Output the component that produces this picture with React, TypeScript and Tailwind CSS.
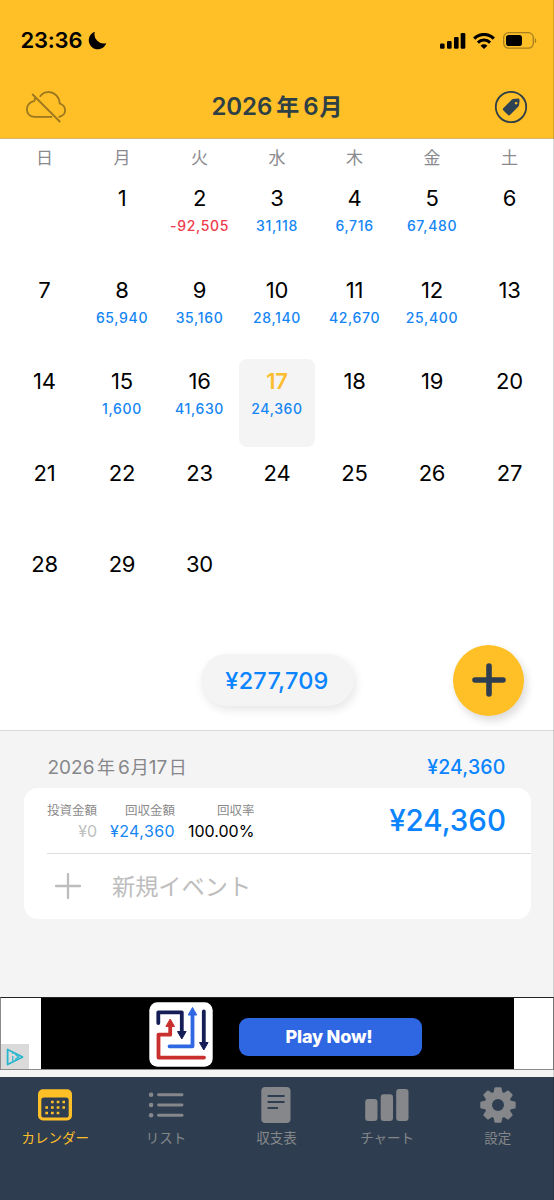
import clsx from "clsx";
import type { ReactNode } from "react";

const weekdays = ["日", "月", "火", "水", "木", "金", "土"];

const amounts: Record<number, number> = {
  2: -92505,
  3: 31118,
  4: 6716,
  5: 67480,
  8: 65940,
  9: 35160,
  10: 28140,
  11: 42670,
  12: 25400,
  15: 1600,
  16: 41630,
  17: 24360,
};

const SELECTED_DAY = 17;
const FIRST_WEEKDAY = 1;
const DAYS_IN_MONTH = 30;

function StatusBar() {
  return (
    <div className="flex h-[80px] items-center pl-[20.5px] pr-[17px] pt-[1px]">
      <span className="text-[22px] font-semibold tracking-[-0.2px]">23:36</span>
      <svg width="19" height="19" viewBox="0 0 19 19" className="ml-[6px]">
        <path
          d="M6.8 .8A9 9 0 1 0 18.3 12.2 9.3 9.3 0 0 1 6.8 .8Z"
          fill="#000"
        />
      </svg>
      <div className="ml-auto flex items-center">
        <svg width="26" height="16" viewBox="0 0 26 16">
          <rect x="0" y="10.5" width="4.6" height="5.2" rx="1.2" />
          <rect x="7" y="8" width="4.6" height="7.7" rx="1.2" />
          <rect x="14" y="4" width="4.6" height="11.7" rx="1.2" />
          <rect x="20.7" y="0" width="4.6" height="15.7" rx="1.2" />
        </svg>
        <svg width="22" height="16" viewBox="0 0 22 16" className="ml-[7px]">
          <path
            d="M1.2 5.6a13.8 13.8 0 0 1 19.6 0"
            fill="none"
            stroke="#000"
            strokeWidth="3.2"
          />
          <path
            d="M4.9 9.6a8.6 8.6 0 0 1 12.2 0"
            fill="none"
            stroke="#000"
            strokeWidth="3"
          />
          <path d="M11 16 7.600 12.700a4.800 4.800 0 0 1 6.800 0Z" />
        </svg>
        <svg width="34" height="17" viewBox="0 0 34 17" className="ml-[8px]">
          <rect
            x=".7"
            y=".7"
            width="29.6"
            height="15.4"
            rx="4.8"
            fill="none"
            stroke="#a8801f"
            strokeWidth="1.3"
          />
          <rect x="3" y="3" width="16" height="11" rx="2.8" />
          <path d="M31.8 6v5.2c1.9-.8 1.9-4.4 0-5.2Z" fill="#a8801f" />
        </svg>
      </div>
    </div>
  );
}

function CloudOffIcon() {
  return (
    <svg
      width="42"
      height="34"
      viewBox="0 0 42 34"
      fill="none"
      stroke="#9b771f"
      strokeWidth="1.8"
    >
      <path d="M8.8 10.8C3.5 12 .9 15 .9 19.3c0 4.6 3.3 7.500 7.800 7.500h17.500" />
      <path d="M8.8 10.8c-.2-1.700 0-2.400.600-3.400M13.800 6.800c2-3.200 5.400-5 9.400-4.700 5.900.4 10.200 4.900 10.500 11.400 3.600 1.200 5.500 3.800 5.400 7.200-.1 3-2.300 5.300-6.500 6.300" />
      <path d="m6.200 4 28 28" />
    </svg>
  );
}

function TagIcon() {
  return (
    <svg width="34" height="34" viewBox="0 0 34 34">
      <circle
        cx="17"
        cy="17"
        r="15.2"
        fill="none"
        stroke="#2f3f48"
        strokeWidth="1.8"
      />
      <path
        fillRule="evenodd"
        fill="#2d4255"
        d="M9.2 18.2 17.5 10c.5-.5 1-.8 1.7-.9l4.6-.5c1.1-.1 1.9.7 1.8 1.8l-.5 4.6c-.1.7-.4 1.2-.9 1.7L16 25c-.6.6-1.4.6-2 0l-4.8-4.8c-.6-.6-.6-1.4 0-2Zm12.9-6.3a1.3 1.3 0 1 0 .01 0Z"
      />
    </svg>
  );
}

function Header() {
  return (
    <header className="h-[139px] border-b border-[#d9b865] bg-[#ffbf27]">
      <StatusBar />
      <div className="grid h-[53px] grid-cols-[1fr_auto_1fr] items-center px-[26px]">
        <CloudOffIcon />
        <h1 className="flex items-center text-[24px] font-semibold leading-[30px] text-[#2e4045]">
          <span className="tracking-[-0.1px]">2026</span>
          <span className="ml-[4px] text-[23px]">年</span>
          <span className="ml-[4px]">6</span>
          <span className="ml-[1px] text-[23px]">月</span>
        </h1>
        <div className="justify-self-end">
          <TagIcon />
        </div>
      </div>
    </header>
  );
}

function DayCell({ day }: { day: number }) {
  const amount = amounts[day];
  const selected = day === SELECTED_DAY;
  return (
    <div className="h-[91.6px] px-[0.5px]">
      <div
        className={clsx(
          "flex h-[88px] flex-col items-center rounded-[8px] pt-[8px]",
          selected && "bg-[#f4f4f4]",
        )}
      >
        <span
          className={clsx(
            "text-[22px] leading-[28px] tracking-[-0.2px]",
            selected ? "font-semibold text-[#fcbd30]" : "text-black",
          )}
        >
          {day}
        </span>
        {amount !== undefined && (
          <span
            className={clsx(
              "mt-[5px] text-[14px] font-medium leading-[18px] tracking-[0.65px]",
              amount < 0 ? "text-[#ee3a4c]" : "text-[#1485f4]",
            )}
          >
            {amount.toLocaleString("en-US")}
          </span>
        )}
      </div>
    </div>
  );
}

function Calendar() {
  const days = Array.from({ length: DAYS_IN_MONTH }, (_, i) => i + 1);
  return (
    <section className="h-[591px] bg-white">
      <div className="grid h-[37px] grid-cols-7 px-[5.75px] pt-[7px] text-center text-[17px] leading-[24px] text-[#8a8a8e]">
        {weekdays.map((name) => (
          <span key={name}>{name}</span>
        ))}
      </div>
      <div className="grid grid-cols-7 px-[5.75px]">
        {Array.from({ length: FIRST_WEEKDAY }, (_, i) => (
          <div key={`blank-${i}`} />
        ))}
        {days.map((day) => (
          <DayCell key={day} day={day} />
        ))}
      </div>
      <div className="relative flex justify-center pt-[20px]">
        <div className="flex h-[52px] w-[153px] items-center justify-center rounded-full bg-[#f4f4f4] pt-[2px] text-[23.5px] font-medium tracking-[0.2px] text-[#0a84ff] shadow-[2px_4px_10px_rgba(0,0,0,0.1)]">
          ¥277,709
        </div>
        <button
          type="button"
          className="absolute right-[30px] top-[11px] flex h-[71px] w-[71px] items-center justify-center rounded-full bg-[#ffbf27] shadow-[3px_5px_8px_rgba(0,0,0,0.14)]"
        >
          <svg width="34" height="34" viewBox="0 0 34 34">
            <path
              d="M17 3v28M3 17h28"
              stroke="#2e3e50"
              strokeWidth="5.6"
              strokeLinecap="round"
            />
          </svg>
        </button>
      </div>
    </section>
  );
}

interface StatProps {
  label: string;
  value: string;
  className: string;
}

function Stat({ label, value, className }: StatProps) {
  return (
    <div className="flex flex-col items-end whitespace-nowrap">
      <span className="text-[12.5px] leading-[18px] text-[#8a8a8a]">{label}</span>
      <span className={clsx("mt-[1px] text-[16px] leading-[20px]", className)}>
        {value}
      </span>
    </div>
  );
}

function DayDetail() {
  return (
    <section className="h-[267px] border-t border-[#d8d8d8] bg-[#f4f4f4] pl-[24px] pr-[23.5px]">
      <div className="flex h-[57px] items-center justify-between pl-[23.5px] pr-[25px] pt-[17px]">
        <span className="flex items-center text-[19px] leading-[24px] text-[#87878b]">
          <span>2026</span>
          <span className="ml-[2.5px] text-[18px]">年</span>
          <span className="ml-[3px]">6</span>
          <span className="ml-[1px] text-[18px]">月</span>
          <span>17</span>
          <span className="ml-[1.5px] text-[18px]">日</span>
        </span>
        <span className="text-[19.5px] font-medium tracking-[0.15px] text-[#0a84ff]">
          ¥24,360
        </span>
      </div>
      <div className="h-[131px] rounded-[14px] bg-white">
        <div className="ml-[23px] flex h-[65.5px] items-center border-b border-[#dedede] pr-[24.5px]">
          <div className="flex gap-[13px] pt-[3px]">
            <Stat label="投資金額" value="¥0" className="text-[#c0c0c0]" />
            <Stat
              label="回収金額"
              value="¥24,360"
              className="tracking-[0.4px] text-[#1485f4]"
            />
            <Stat label="回収率" value="100.00%" className="text-black" />
          </div>
          <span className="ml-auto text-[29.5px] font-medium text-[#0a84ff]">
            ¥24,360
          </span>
        </div>
        <div className="flex h-[65px] items-center pl-[31px]">
          <svg width="26" height="26" viewBox="0 0 26 26">
            <path
              d="M13 1v24M1 13h24"
              stroke="#bdbdbd"
              strokeWidth="2.300"
              strokeLinecap="round"
            />
          </svg>
          <span className="ml-[31px] mt-[2px] text-[23.2px] leading-[32px] text-[#bdbdbd]">
            新規イベント
          </span>
        </div>
      </div>
    </section>
  );
}

function AdBanner() {
  return (
    <div className="h-[80px] bg-[#f4f4f4]">
      <div className="flex h-[73px] justify-between border-b border-l border-r border-t border-[#8b8b8b] border-t-[#222] bg-white">
        <div className="flex w-[40px] items-end">
          <div className="flex h-[25px] w-[28px] items-center justify-center bg-[#dadada]">
            <svg width="18" height="18" viewBox="0 0 18 18" fill="none" stroke="#28b6cf">
              <path d="M1.6 1.500v15L16.600 9Z" strokeWidth="1.800" strokeLinejoin="round" />
              <path d="M6.800 8v6M6.800 4.500v1.500M9 6l3.500 3L9 11.500" strokeWidth="1.200" />
            </svg>
          </div>
        </div>
        <div className="flex w-[473px] items-center bg-black pl-[108px]">
          <svg width="64" height="65" viewBox="0 0 64 65" fill="none" className="mt-[1px]">
            <rect x=".3" y=".3" width="63.4" height="64.4" rx="8" fill="#fff" />
            <g strokeWidth="3.800" strokeLinejoin="round" strokeLinecap="round">
              <path d="M9.300 21V10.300h23.500V30" stroke="#141d55" />
              <path d="M54.800 9.500V42" stroke="#141d55" />
              <path d="M20.500 44.300h23V11" stroke="#3067e3" />
              <path d="M55 55.600H9.500V32.700h11.700V22" stroke="#c9302d" />
            </g>
            <path d="M28.500 29.500h8.600l-4.300 7.500Z" fill="#141d55" stroke="#141d55" />
            <path d="M50.500 40.500h8.600l-4.300 7.500Z" fill="#141d55" stroke="#141d55" />
            <path d="M39.200 13h8.600l-4.300-7.500Z" fill="#3067e3" stroke="#3067e3" />
            <path d="M16.900 24.500h8.600l-4.300-7.500Z" fill="#c9302d" stroke="#c9302d" />
          </svg>
          <div className="ml-[26px] mt-[6px] flex h-[38px] w-[183px] items-center justify-center rounded-[9px] bg-[#2f66e2] pb-[1px] pr-[3px] text-[18px] font-extrabold tracking-[-0.2px] text-white">
            Play Now!
          </div>
        </div>
        <div className="w-[39px]" />
      </div>
    </div>
  );
}

function CalendarIcon() {
  return (
    <svg width="36" height="36" viewBox="0 0 36 36">
      <path
        fillRule="evenodd"
        fill="#ffbf27"
        d="M6 2.200h24a5 5 0 0 1 5 5v21.300a5 5 0 0 1-5 5H6a5 5 0 0 1-5-5v-21.300a5 5 0 0 1 5-5ZM7 10.500a2.700 2.700 0 0 0-2.700 2.700v14.700A2.700 2.700 0 0 0 7 30.600h22a2.700 2.700 0 0 0 2.700-2.700v-14.700A2.700 2.700 0 0 0 29 10.500Z"
      />
      <g stroke="#ffbf27" strokeWidth="2.700" strokeDasharray="2.700 3">
        <path d="M14 15h14" />
        <path d="M8.300 20.500h19.700" />
        <path d="M8.300 26h14" />
      </g>
    </svg>
  );
}

function ListIcon() {
  return (
    <svg width="36" height="36" viewBox="0 0 36 36" stroke="#85878a" fill="#85878a">
      {[7.7, 18, 28.3].map((y) => (
        <g key={y}>
          <circle cx="3.1" cy={y} r="2.3" stroke="none" />
          <path d={`M10.500 ${y}h23.500`} strokeWidth="2.9" strokeLinecap="round" />
        </g>
      ))}
    </svg>
  );
}

function ReportIcon() {
  return (
    <svg width="36" height="36" viewBox="0 0 36 36">
      <rect x="3.3" y="0" width="29.2" height="36" rx="4" fill="#85878a" />
      <path
        d="M10.300 9h15.600M10.300 15h15.600M10.300 21h9"
        stroke="#2e3e50"
        strokeWidth="1.8"
        strokeLinecap="round"
      />
    </svg>
  );
}

function ChartIcon() {
  return (
    <svg width="44" height="36" viewBox="0 0 44 36" fill="#85878a">
      <rect x=".2" y="12" width="12.300" height="22" rx="3" />
      <rect x="15.700" y="7.200" width="12.300" height="26.800" rx="3" />
      <rect x="31.200" y="2" width="12.300" height="32" rx="3" />
    </svg>
  );
}

function GearIcon() {
  return (
    <svg width="36" height="36" viewBox="0 0 36 36" fill="#85878a">
      {[0, 45, 90, 135].map((angle) => (
        <path
          key={angle}
          transform={`rotate(${angle} 18 18)`}
          d="M15.500 .3h5q.9 0 1.100 1L22.800 7.500h-9.600L14.400 1.300q.2-1 1.100-1ZM15.500 35.700h5q.9 0 1.100-1L22.800 28.500h-9.600l1.200 6.200q.2 1 1.100 1Z"
        />
      ))}
      <circle cx="18" cy="18" r="9.700" fill="none" stroke="#85878a" strokeWidth="7.400" />
    </svg>
  );
}

interface TabProps {
  label: string;
  icon: ReactNode;
  active?: boolean;
}

function Tab({ label, icon, active }: TabProps) {
  return (
    <button
      type="button"
      className={clsx(
        "flex flex-1 flex-col items-center whitespace-nowrap text-[13.5px] leading-[20px]",
        active ? "text-[#ffbf27]" : "text-[#85878a]",
      )}
    >
      {icon}
      <span className="mt-[5px]">{label}</span>
    </button>
  );
}

function TabBar() {
  return (
    <nav className="flex h-[123px] items-start bg-[#2e3e50] pr-[1px] pt-[10px]">
      <Tab label="カレンダー" icon={<CalendarIcon />} active />
      <Tab label="リスト" icon={<ListIcon />} />
      <Tab label="収支表" icon={<ReportIcon />} />
      <Tab label="チャート" icon={<ChartIcon />} />
      <Tab label="設定" icon={<GearIcon />} />
    </nav>
  );
}

export default function App() {
  return (
    <div
      lang="ja"
      className="relative h-[1200px] w-[554px] overflow-hidden bg-white font-['Inter','Noto_Sans_CJK_JP',sans-serif]"
    >
      <Header />
      <Calendar />
      <DayDetail />
      <AdBanner />
      <TabBar />
      <div className="absolute right-0 top-0 h-full w-px bg-black/15" />
    </div>
  );
}
